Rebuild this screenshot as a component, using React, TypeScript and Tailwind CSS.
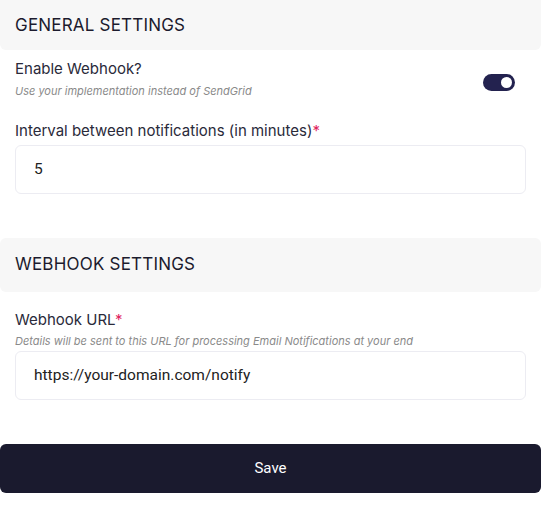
import { useState } from 'react';

function SectionHeader({ title, className = '' }: { title: string; className?: string }) {
  return (
    <div className={`flex items-center rounded-md bg-[#f7f7f7] px-[15px] ${className}`}>
      <h2 className="text-[17px] font-normal tracking-[0.2px] text-[#1c1b2e]">{title}</h2>
    </div>
  );
}

function Required() {
  return <span className="text-[#e0245e]">*</span>;
}

export default function App() {
  const [enabled, setEnabled] = useState(true);

  return (
    <div className="w-[541px] bg-white font-['Inter',sans-serif] text-[#1c1b2e]">
      {/* General settings */}
      <SectionHeader title="GENERAL SETTINGS" className="h-[50px] rounded-t-none pt-[2px]" />

      <div className="px-[15px]">
        <div className="flex items-start justify-between pt-[9px]">
          <div>
            <p className="text-[15px] leading-[19px] text-[#2a2a3a]">Enable Webhook?</p>
            <p className="mt-[6px] text-[11px] italic leading-[14px] text-[#8a8a8a]">
              Use your implementation instead of SendGrid
            </p>
          </div>
          <button
            onClick={() => setEnabled(!enabled)}
            className={`mr-[11px] mt-[15px] flex h-[17px] w-[32px] items-center rounded-full px-[3px] ${
              enabled ? 'justify-end bg-[#23224f]' : 'justify-start bg-gray-300'
            }`}
          >
            <span className="h-[11px] w-[11px] rounded-full bg-white" />
          </button>
        </div>

        <p className="mt-[23px] text-[15px] leading-[19px] text-[#2a2a3a]">
          Interval between notifications (in minutes)
          <Required />
        </p>
        <div className="mt-[5px] flex h-[49px] items-center rounded-md border border-[#ececf2] px-[18px] font-['Roboto',sans-serif] text-[15.5px] text-[#222]">
          5
        </div>
      </div>

      {/* Webhook settings */}
      <SectionHeader title="WEBHOOK SETTINGS" className="mt-[44px] h-[54px]" />

      <div className="px-[15px]">
        <p className="mt-[18px] text-[15px] leading-[19px] text-[#2a2a3a]">
          Webhook URL
          <Required />
        </p>
        <p className="mt-[5px] text-[11px] italic leading-[14px] text-[#8a8a8a]">
          Details will be sent to this URL for processing Email Notifications at your end
        </p>
        <div className="mt-[3px] flex h-[49px] items-center rounded-md border border-[#ececf2] px-[18px] font-['Roboto',sans-serif] text-[15.5px] text-[#222]">
          https://your-domain.com/notify
        </div>
      </div>

      <button className="mt-[44px] flex h-[49px] w-full items-center justify-center rounded-md bg-[#1a1a2e] font-['Roboto',sans-serif] text-[15px] text-white">
        Save
      </button>
      <div className="h-[16px]" />
    </div>
  );
}
